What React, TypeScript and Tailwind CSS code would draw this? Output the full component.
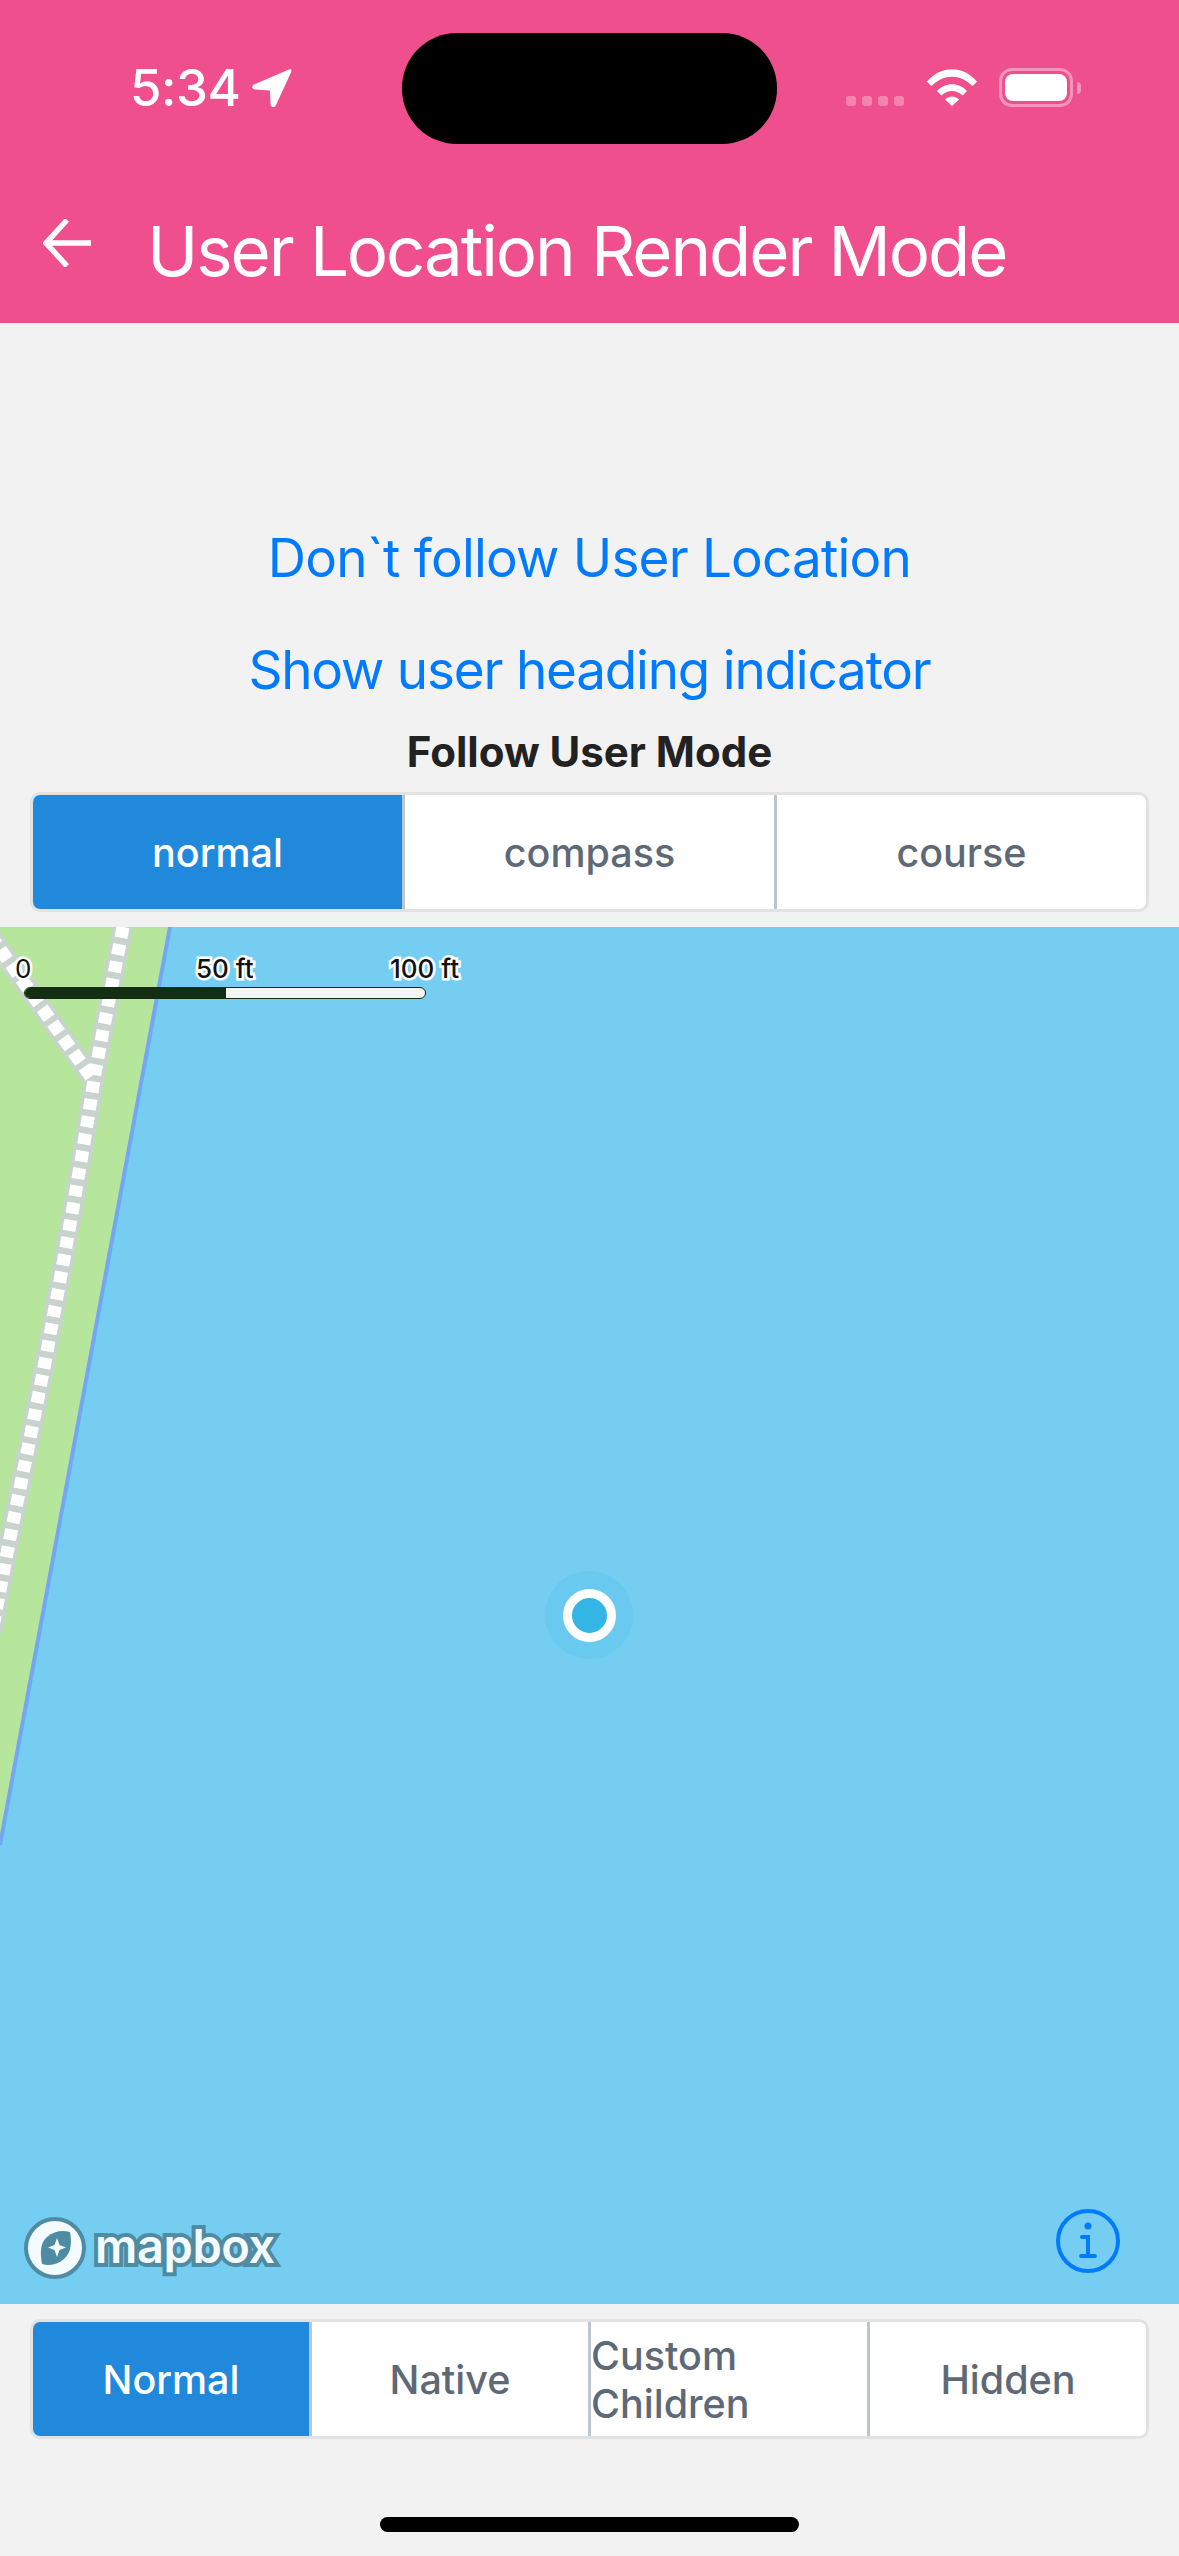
import React from "react";

const SANS = "font-['Inter','Liberation_Sans',sans-serif]";

function Segments({ items, size }: { items: string[]; size: string }) {
  return (
    <div className="mx-[30px] flex h-[120px] overflow-hidden rounded-[10px] border-[3px] border-[#e2e2e2] bg-white">
      {items.map((t, i) => (
        <div
          key={t}
          className={`flex flex-1 items-center justify-center pt-[2px] ${i > 0 ? "border-l-[3px] border-[#bdc6cf]" : ""} ${
            i === 0 ? "bg-[#2089dc] text-white" : "text-[#5e6977]"
          }`}
        >
          <span className={`${size} w-auto font-medium leading-[48px]`}>{t}</span>
        </div>
      ))}
    </div>
  );
}

function MapArt() {
  const main = "M123,0 L95,146 C84,220 68,310 56,375 C41,460 24,540 8,621 L-8,705";
  const side = "M-10,8 L91,150";
  return (
    <svg className="h-full w-full" viewBox="0 0 1179 1377" preserveAspectRatio="none">
      <rect width="1179" height="1377" fill="#75cef1" />
      <polygon points="0,0 170,0 0,918" fill="#b6e59c" />
      <line x1="170" y1="0" x2="0" y2="918" stroke="#74a6f4" strokeWidth="4" />
      <g fill="none">
        <path d={side} stroke="#c9d3ce" strokeWidth="20" />
        <path d={main} stroke="#c9d3ce" strokeWidth="20" />
        <path d={side} stroke="#ffffff" strokeWidth="13" strokeDasharray="12 6" />
        <path d={main} stroke="#ffffff" strokeWidth="13" strokeDasharray="11 6.5" />
      </g>
    </svg>
  );
}

const halo = "[paint-order:stroke] [-webkit-text-stroke:5px_white] text-[#111]";

export default function App() {
  return (
    <div className={`relative flex h-[2556px] w-[1179px] flex-col overflow-hidden bg-[#f2f2f2] ${SANS}`}>
      {/* Header */}
      <header className="flex h-[323px] shrink-0 flex-col bg-[#ef4f8c] text-white">
        <div className="flex h-[190px] items-start justify-between pl-[130px] pr-[106px] pt-[60px]">
          <div className="flex items-center gap-[12px]">
            <span className="text-[51px] font-medium leading-[56px] tracking-[-0.5px]">5:34</span>
            <svg width="40" height="40" viewBox="0 0 40 40" fill="white">
              <path d="M37 1.5 C39 .8 40 2 39.2 4 L24 37 C22.6 40 19 40 18.6 36.6 L18 22.5 L3 21.5 C-.4 21 -.6 18 2 16.6 Z" />
            </svg>
          </div>
          <div className="flex items-start">
            <div className="mr-[23px] mt-[36px] flex gap-[6px]">
              {[0, 1, 2, 3].map((d) => (
                <div key={d} className="h-[10px] w-[10px] rounded-[3px] bg-white/30" />
              ))}
            </div>
            <svg className="mt-[9px]" width="50" height="37" viewBox="0 0 50 37" fill="white">
              <path d="M0 12.5 C14 -4 36 -4 50 12.5 L45.5 17 C33.5 4.5 16.5 4.5 4.5 17 Z" />
              <path d="M10 22 C18 13 32 13 40 22 L35.5 26.5 C29.5 20.5 20.5 20.5 14.5 26.5 Z" />
              <path d="M18 30.5 C22 26.5 28 26.5 32 30.5 L25 37 Z" />
            </svg>
            <div className="relative ml-[22px] mt-[8px] h-[39px] w-[74px] rounded-[13px] border-[3px] border-white/40 p-[3px]">
              <div className="h-full w-full rounded-[8px] bg-white" />
              <div className="absolute left-[75px] top-[11px] h-[12px] w-[4px] rounded-r-[4px] bg-white/40" />
            </div>
          </div>
        </div>
        <div className="flex items-start pl-[43px]">
          <svg className="mt-[29px]" width="48" height="48" viewBox="0 0 48 48" fill="none" stroke="white" strokeWidth="5.5">
            <path d="M24 1 L3 24 L24 47 M3 24 H48" />
          </svg>
          <h1 className="ml-[56px] mt-[21px] text-[69px] font-normal leading-[80px] tracking-[-2.1px]">User Location Render Mode</h1>
        </div>
      </header>

      {/* Actions */}
      <div className="mt-[203px] flex shrink-0 flex-col items-center gap-[48px]">
        <button className="h-[64px] text-[53px] leading-[64px] tracking-[-0.8px] text-[#007aff]">Don`t follow User Location</button>
        <button className="h-[64px] text-[53px] leading-[64px] tracking-[-1.2px] text-[#007aff]">Show user heading indicator</button>
      </div>
      <div className="mt-[20px] h-[60px] shrink-0 text-center text-[42px] font-bold leading-[60px] text-[#222]">Follow User Mode</div>
      <div className="mt-[10px] shrink-0">
        <Segments items={["normal", "compass", "course"]} size="text-[39.5px]" />
      </div>

      {/* Map */}
      <div className="relative mt-[15px] min-h-0 flex-1 overflow-hidden">
        <MapArt />
        <div className="absolute left-[24px] top-[60px] flex h-[12px] w-[402px] overflow-hidden rounded-[6px] border border-[#142e12] bg-[#f5f5f5]">
          <div className="h-full w-[201px] bg-[#142e12]" />
        </div>
        <span className={`absolute left-[15px] top-[27px] text-[26px] leading-[30px] ${halo}`}>0</span>
        <span className={`absolute left-[196px] top-[27px] text-[26px] font-medium leading-[30px] ${halo}`}>50 ft</span>
        <span className={`absolute left-[390px] top-[27px] text-[26px] font-medium leading-[30px] ${halo}`}>100 ft</span>

        <div className="absolute left-[545px] top-[644px] flex h-[88px] w-[88px] items-center justify-center rounded-full bg-[#69c9ee]">
          <div className="h-[53px] w-[53px] rounded-full border-[9px] border-white bg-[#33b5e5]" />
        </div>

        <div className="absolute left-[24px] top-[1290px] flex items-center">
          <svg width="62" height="62" viewBox="0 0 62 62">
            <circle cx="31" cy="31" r="29" fill="#f4fbff" stroke="#4f8ba2" strokeWidth="4" />
            <path d="M18 47 C16 36 16 26 23 20 C30 14 38 13 46 15 C48 26 47 36 40 42 C33 48 26 49 18 47 Z" fill="#4f8ba2" />
            <path d="M33 21 L35.5 28 L42 30.5 L35.5 33 L33 40 L30.5 33 L24 30.5 L30.5 28 Z" fill="#f4fbff" />
          </svg>
          <span className="ml-[9px] mt-[-4px] text-[47px] font-semibold leading-[62px] tracking-[-0.4px] text-[#f4fbff] [paint-order:stroke] [-webkit-text-stroke:8px_#4f8ba2]">mapbox</span>
        </div>

        <svg className="absolute left-[1056px] top-[1282px]" width="64" height="64" viewBox="0 0 64 64" fill="none" stroke="#007aff" strokeWidth="4" strokeLinecap="round">
          <circle cx="32" cy="32" r="30" />
          <circle cx="32" cy="17" r="3.5" fill="#007aff" stroke="none" />
          <path d="M26 28 H32 V47 M25 47 H39" />
        </svg>
      </div>

      {/* Bottom */}
      <div className="mt-[15px] shrink-0">
        <Segments items={["Normal", "Native", "Custom Children", "Hidden"]} size="text-[39.5px]" />
      </div>
      <div className="mb-[24px] mt-[78px] h-[15px] w-[419px] shrink-0 self-center rounded-[8px] bg-black" />

      {/* Dynamic island */}
      <div className="absolute left-[402px] top-[33px] h-[111px] w-[375px] rounded-[55px] bg-black" />
    </div>
  );
}
